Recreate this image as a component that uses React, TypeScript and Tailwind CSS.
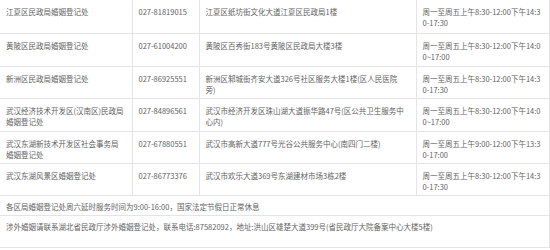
const rows = [
  {
    name: ["江夏区民政局婚姻登记处"],
    tel: "027-81819015",
    addr: ["江夏区纸坊街文化大道江夏区民政局1楼"],
    time: ["周一至周五上午8:30-12:00下午14:3", "0-17:30"],
    h: "h-[33px]",
  },
  {
    name: ["黄陂区民政局婚姻登记处"],
    tel: "027-61004200",
    addr: ["黄陂区百秀街183号黄陂区民政局大楼3楼"],
    time: ["周一至周五上午8:30-12:00下午14:0", "0~17:00"],
    h: "h-[33px]",
  },
  {
    name: ["新洲区民政局婚姻登记处"],
    tel: "027-86925551",
    addr: ["新洲区邾城街齐安大道326号社区服务大楼1楼(区人民医院", "旁)"],
    time: ["周一至周五上午8:30-12:00下午14:3", "0-17:30"],
    h: "h-[32px]",
  },
  {
    name: ["武汉经济技术开发区(汉南区)民政局", "婚姻登记处"],
    tel: "027-84896561",
    addr: ["武汉市经济开发区珠山湖大道振华路47号(区公共卫生服务中", "心内)"],
    time: ["周一至周五上午8:30-12:00下午14:0", "0~17:00"],
    h: "h-[33px]",
  },
  {
    name: ["武汉东湖新技术开发区社会事务局", "婚姻登记处"],
    tel: "027-67880551",
    addr: ["武汉市高新大道777号光谷公共服务中心(南四门二楼)"],
    time: ["周一至周五上午9:00-12:00下午13:3", "0-17:00"],
    h: "h-[32px]",
  },
  {
    name: ["武汉东湖风景区婚姻登记处"],
    tel: "027-86773376",
    addr: ["武汉市欢乐大道369号东湖建材市场3栋2楼"],
    time: ["周一至周五上午8:30-12:00下午14:3", "0-17:30"],
    h: "h-[32px]",
  },
];

function Lines({ lines }: { lines: string[] }) {
  return (
    <>
      {lines.map((l, i) => (
        <span key={i} className="block whitespace-nowrap">
          {l}
        </span>
      ))}
    </>
  );
}

export default function App() {
  const cell = "border border-[#e4e4e4] align-top px-[6px] pt-[6px] pb-0 leading-[11px] first:border-l-0";
  return (
    <div className="w-[550px] h-[250px] bg-white overflow-hidden font-['Noto_Sans_CJK_SC','Microsoft_YaHei',sans-serif] text-[7.5px] text-[#5f5f5f]">
      <table className="w-[549px] border-collapse table-fixed">
        <colgroup>
          <col className="w-[132px]" />
          <col className="w-[67px]" />
          <col className="w-[217px]" />
          <col className="w-[133px]" />
        </colgroup>
        <tbody>
          {rows.map((r, i) => (
            <tr key={r.tel} className={r.h + (i === 0 ? " [&>td]:border-t-0" : "")}>
              <td className={cell}>
                <Lines lines={r.name} />
              </td>
              <td className={cell + " px-[5px]"}>{r.tel}</td>
              <td className={cell}>
                <Lines lines={r.addr} />
              </td>
              <td className={cell + " px-[5px]"}>
                <Lines lines={r.time} />
              </td>
            </tr>
          ))}
          <tr className="h-[20px]">
            <td colSpan={4} className="border border-l-0 border-[#e4e4e4] align-top px-[6px] pt-[5px] leading-[11px]">
              各区局婚姻登记处周六延时服务时间为9:00-16:00，国家法定节假日正常休息
            </td>
          </tr>
          <tr className="h-[32px]">
            <td colSpan={4} className="border border-l-0 border-[#e4e4e4] align-top px-[6px] pt-[5px] leading-[11px]">
              涉外婚姻请联系湖北省民政厅涉外婚姻登记处，联系电话:87582092，地址:洪山区雄楚大道399号(省民政厅大院备案中心大楼5楼)
            </td>
          </tr>
        </tbody>
      </table>
    </div>
  );
}
